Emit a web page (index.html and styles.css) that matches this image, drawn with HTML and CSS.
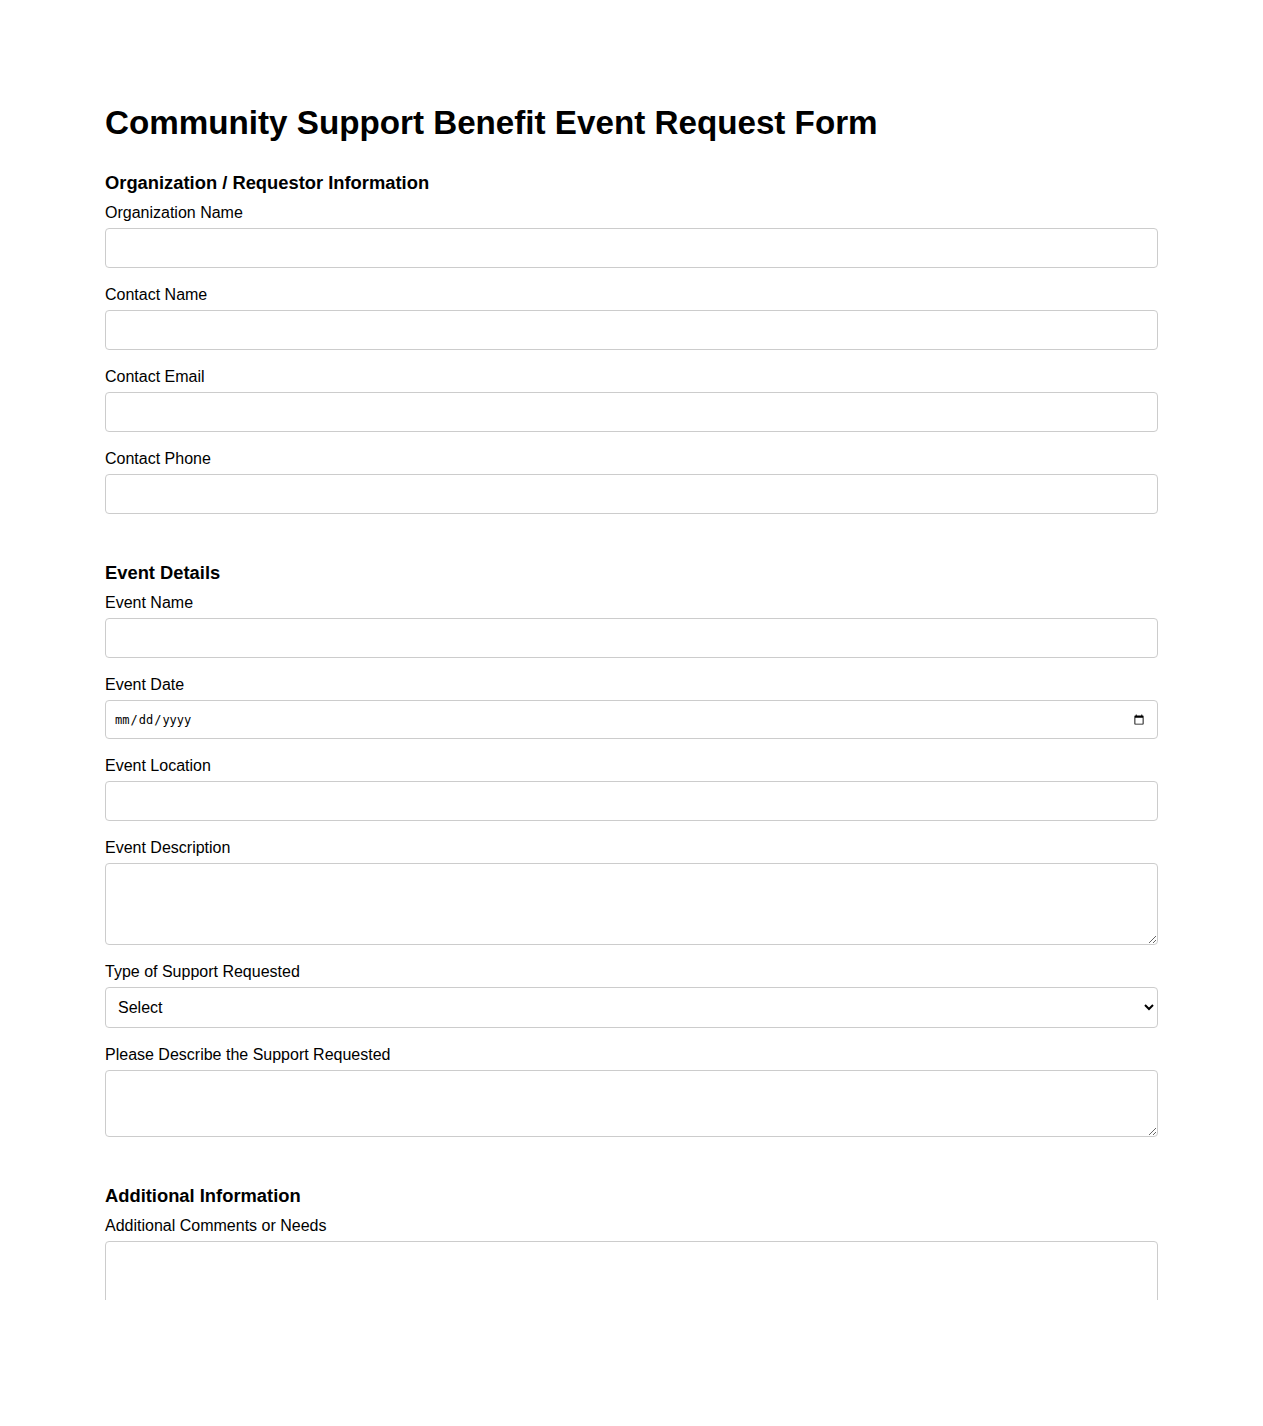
FILE: index.html
```html
<!DOCTYPE html>
<html lang="en">
<head>
    <meta charset="UTF-8">
    <meta name="viewport" content="width=device-width, initial-scale=1.0">
    <title>Community Support Benefit Event Request Form</title>
    <link rel="stylesheet" href="styles.css">
</head>
<body>
    <div class="page">
        <form class="container">
            <h1>Community Support Benefit Event Request Form</h1>

            <section class="section">
                <h2>Organization / Requestor Information</h2>
                <div class="field">
                    <label for="orgName">Organization Name</label>
                    <input type="text" id="orgName" class="input">
                </div>
                <div class="field">
                    <label for="contactName">Contact Name</label>
                    <input type="text" id="contactName" class="input">
                </div>
                <div class="field">
                    <label for="contactEmail">Contact Email</label>
                    <input type="email" id="contactEmail" class="input">
                </div>
                <div class="field">
                    <label for="contactPhone">Contact Phone</label>
                    <input type="tel" id="contactPhone" class="input">
                </div>
            </section>

            <section class="section">
                <h2>Event Details</h2>
                <div class="field">
                    <label for="eventName">Event Name</label>
                    <input type="text" id="eventName" class="input">
                </div>
                <div class="field">
                    <label for="eventDate">Event Date</label>
                    <input type="date" id="eventDate" class="input date">
                </div>
                <div class="field">
                    <label for="eventLocation">Event Location</label>
                    <input type="text" id="eventLocation" class="input">
                </div>
                <div class="field">
                    <label for="eventDescription">Event Description</label>
                    <textarea id="eventDescription" class="input textarea tall"></textarea>
                </div>
                <div class="field">
                    <label for="supportType">Type of Support Requested</label>
                    <select id="supportType" class="input select">
                        <option>Select</option>
                        <option>Sponsorship</option>
                        <option>Volunteers</option>
                        <option>In-Kind Donation</option>
                        <option>Other</option>
                    </select>
                </div>
                <div class="field">
                    <label for="supportDescription">Please Describe the Support Requested</label>
                    <textarea id="supportDescription" class="input textarea short"></textarea>
                </div>
            </section>

            <section class="section">
                <h2>Additional Information</h2>
                <div class="field">
                    <label for="comments">Additional Comments or Needs</label>
                    <textarea id="comments" class="input textarea tall"></textarea>
                </div>
            </section>
        </form>
    </div>
</body>
</html>
```

FILE: styles.css
```css
* {
    margin: 0;
    padding: 0;
    box-sizing: border-box;
}

body {
    font-family: 'Liberation Sans', Arial, Helvetica, sans-serif;
    color: #000;
    background: #fff;
}

/* the form area is cut off at a fixed height */
.page {
    height: 1300px;
    overflow: hidden;
}

.container {
    max-width: 1053px;
    margin: 0 auto;
    padding-top: 104px;
}

h1 {
    font-size: 33.2px;
    line-height: 38px;
    font-weight: bold;
    margin-bottom: 31px;
}

.section {
    margin-bottom: 49px;
}

.section h2 {
    font-size: 18.35px;
    line-height: 20px;
    font-weight: bold;
    margin-bottom: 11px;
}

.field {
    margin-bottom: 18px;
}

.field label {
    display: block;
    font-size: 16px;
    line-height: 18px;
    margin-bottom: 6px;
}

.input {
    display: block;
    width: 100%;
    height: 40px;
    padding: 10px;
    border: 1px solid #ccc;
    border-radius: 4px;
    background: #fff;
    font-family: 'Liberation Sans', Arial, sans-serif;
    font-size: 16px;
    color: #000;
}

.date {
    height: 39px;
    padding-left: 8px;
    font-family: 'DejaVu Sans Mono', monospace;
    font-size: 12px;
}

.select {
    height: 41px;
    padding: 0 8px;
}

.textarea {
    resize: vertical;
}

.textarea.tall {
    height: 82px;
}

.textarea.short {
    height: 67px;
}
```
